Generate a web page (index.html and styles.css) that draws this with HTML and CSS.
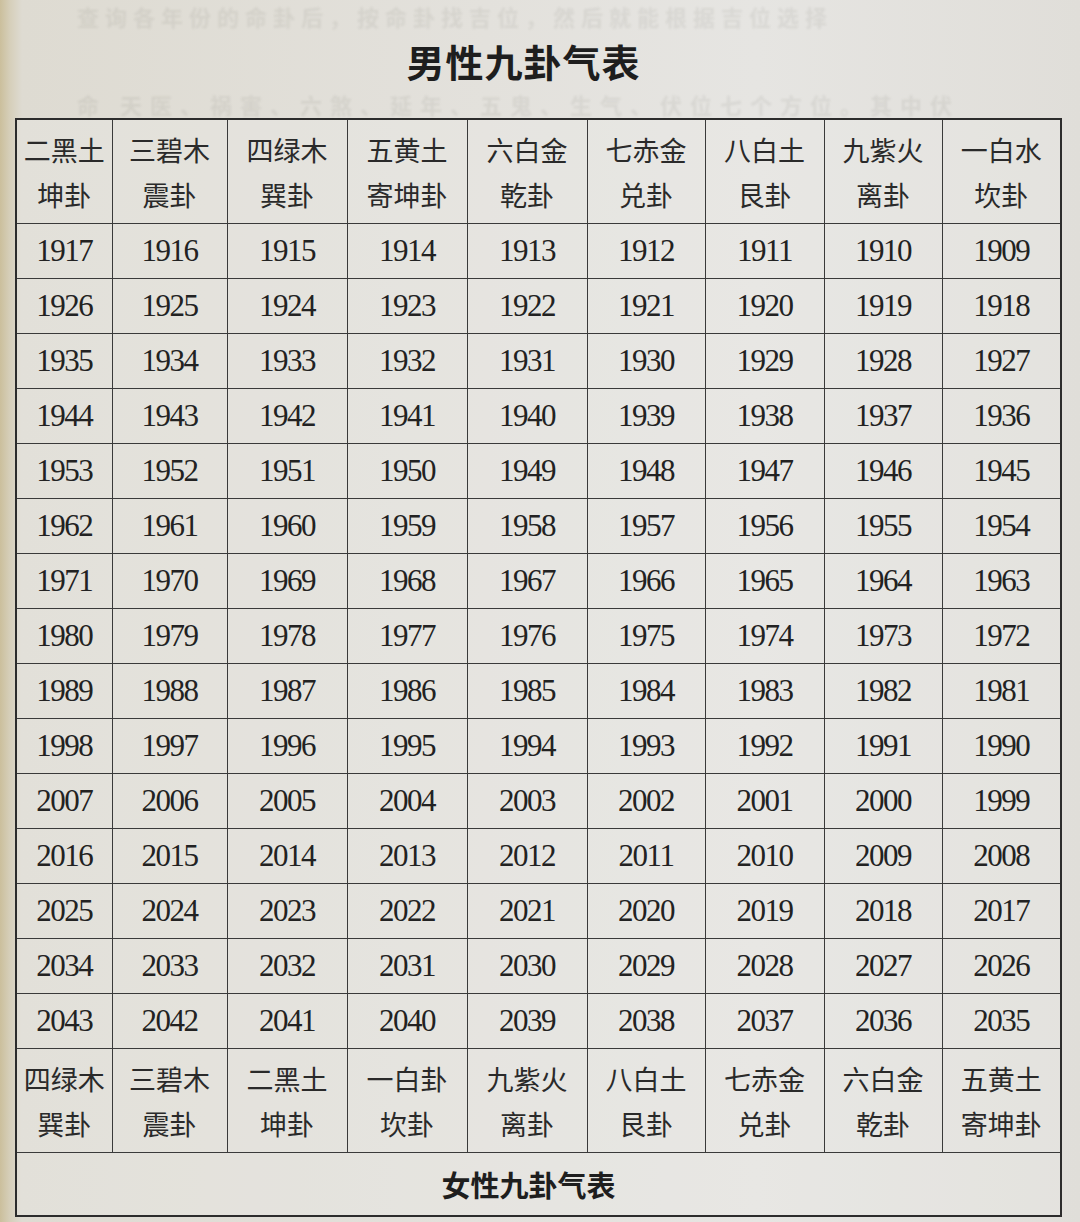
FILE: index.html
```
<!DOCTYPE html>
<html lang="zh">
<head>
<meta charset="utf-8">
<link rel="stylesheet" href="styles.css">
</head>
<body>
<div class="page">
  <header class="top">
    <p class="ghost ghost-1">查询各年份的命卦后，按命卦找吉位，然后就能根据吉位选择</p>
    <h1 class="title">男性九卦气表</h1>
    <p class="ghost ghost-2">命 天医、祸害、六煞、延年、五鬼、生气、伏位七个方位。其中伏</p>
  </header>
  <div class="frame">
    <table class="chart">
      <colgroup>
        <col class="c1"><col class="c2"><col class="c3"><col class="c4"><col class="c5"><col class="c6"><col class="c7"><col class="c8"><col class="c9">
      </colgroup>
      <thead>
        <tr class="head">
          <th>二黑土<br>坤卦</th><th>三碧木<br>震卦</th><th>四绿木<br>巽卦</th><th>五黄土<br>寄坤卦</th><th>六白金<br>乾卦</th><th>七赤金<br>兑卦</th><th>八白土<br>艮卦</th><th>九紫火<br>离卦</th><th>一白水<br>坎卦</th>
        </tr>
      </thead>
      <tbody id="rows"></tbody>
      <tfoot>
        <tr class="head foot">
          <th>四绿木<br>巽卦</th><th>三碧木<br>震卦</th><th>二黑土<br>坤卦</th><th>一白卦<br>坎卦</th><th>九紫火<br>离卦</th><th>八白土<br>艮卦</th><th>七赤金<br>兑卦</th><th>六白金<br>乾卦</th><th>五黄土<br>寄坤卦</th>
        </tr>
      </tfoot>
    </table>
    <div class="caption">女性九卦气表</div>
  </div>
</div>
<script src="script.js"></script>
</body>
</html>
```

FILE: script.js
```
(function () {
  var body = document.getElementById('rows');
  for (var r = 0; r < 15; r++) {
    var tr = document.createElement('tr');
    tr.className = 'row';
    var start = 1917 + r * 9;
    for (var c = 0; c < 9; c++) {
      var td = document.createElement('td');
      td.textContent = String(start - c);
      tr.appendChild(td);
    }
    body.appendChild(tr);
  }
})();
```

FILE: styles.css
```
html, body {
  margin: 0;
  padding: 0;
}
body {
  width: 1080px;
  height: 1222px;
  overflow: hidden;
  background: linear-gradient(to right, #cbbf9c 0px, #d6cfba 10px, #dedbd2 22px, #e3e1dc 45%, #e6e5e2 70%, #e0ded9 100%);
  color: #262626;
  font-family: "Noto Sans CJK SC", "Noto Sans", sans-serif;
}
.page {
  padding-left: 15px;
  width: 1047px;
}
.top {
  position: relative;
  height: 118px;
  display: flex;
  justify-content: center;
  align-items: flex-start;
}
.title {
  margin: 42px 30px 0 0;
  font-size: 38px;
  line-height: 38px;
  font-weight: 700;
  color: #1e1e1e;
  position: relative;
  letter-spacing: 1px;
}
.ghost {
  position: absolute;
  margin: 0;
  font-size: 22px;
  line-height: 32px;
  font-weight: 700;
  color: rgba(90, 85, 80, 0.09);
  white-space: nowrap;
  filter: blur(1.3px);
}
.ghost-1 {
  left: 62px;
  top: 0;
  letter-spacing: 6px;
}
.ghost-2 {
  left: 62px;
  top: 88px;
  letter-spacing: 8px;
}
.frame {
  border: 2px solid #2c2c2c;
  width: 1043px;
  background: rgba(236, 235, 232, 0.35);
}
.chart {
  border-collapse: collapse;
  table-layout: fixed;
  width: 1043px;
}
.c1 { width: 95px; }
.c2 { width: 115px; }
.c3 { width: 120px; }
.c4 { width: 120px; }
.c5 { width: 120px; }
.c6 { width: 118px; }
.c7 { width: 119px; }
.c8 { width: 118px; }
.c9 { width: 118px; }
.chart th, .chart td {
  border-right: 1.5px solid #3a3a3a;
  border-bottom: 1.5px solid #3a3a3a;
  padding: 0;
  text-align: center;
  vertical-align: middle;
}
.chart th:last-child, .chart td:last-child {
  border-right: none;
}
.head th {
  height: 103px;
  font-size: 27px;
  line-height: 45px;
  font-weight: 400;
  color: #2a2a2a;
}
.row td {
  height: 54px;
  font-family: "Liberation Serif", "Times New Roman", serif;
  font-size: 31px;
  letter-spacing: -1.5px;
  color: #222;
}
.caption {
  height: 62px;
  display: flex;
  align-items: center;
  justify-content: center;
  padding-right: 20px;
  font-size: 29px;
  font-weight: 700;
  color: #1e1e1e;
}
```
